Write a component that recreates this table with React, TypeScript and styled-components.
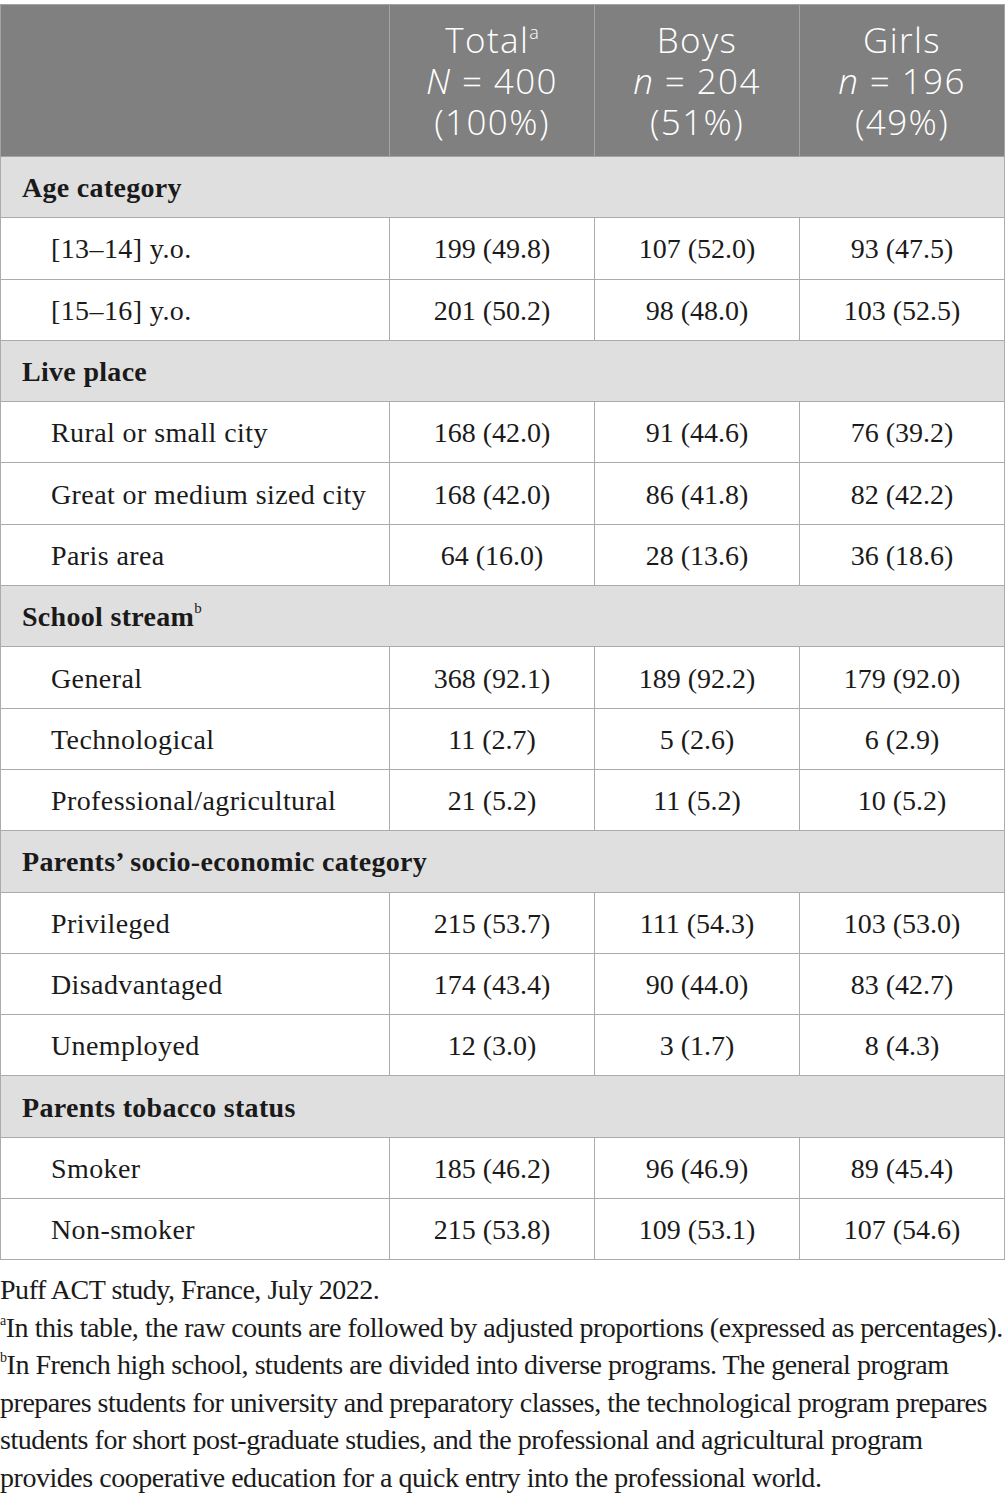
import React from "react";
import styled, { createGlobalStyle } from "styled-components";

const Global = createGlobalStyle`
  html, body { margin: 0; padding: 0; background: #fff; }
  body { font-family: "Liberation Serif", serif; color: #1a1a1a; }
`;

const Page = styled.div`
  width: 1005px;
  padding-top: 4px;
`;

const Table = styled.table`
  width: 1004px;
  border-collapse: collapse;
  table-layout: fixed;
  border: 1.5px solid #ababab;
`;

const HeadCell = styled.th`
  background: #7f807f;
  color: #fff;
  font-family: "Open Sans", sans-serif;
  font-weight: 300;
  font-size: 35px;
  letter-spacing: 1.4px;
  line-height: 41px;
  text-align: center;
  border: 1.5px solid #a3a3a3;
  padding: 14px 0 14px;
  height: 152px;
  box-sizing: border-box;
  vertical-align: middle;
  sup { font-size: 18px; vertical-align: 14px; line-height: 0; letter-spacing: 0; }
  i { font-style: italic; }
`;

const SectionCell = styled.td`
  background: #e0dfe0;
  font-family: "Liberation Serif", serif;
  font-weight: 700;
  font-size: 28px;
  letter-spacing: 0.3px;
  height: 61px;
  box-sizing: border-box;
  padding: 2px 0 0 21px;
  border: 1.5px solid #ababab;
  sup { font-size: 15px; font-weight: 400; vertical-align: 13px; line-height: 0; }
`;

const Row = styled.tr`
  height: 61.3px;
`;

const LabelCell = styled.td`
  font-size: 28px;
  letter-spacing: 0.4px;
  padding: 2px 0 0 50px;
  border: 1.5px solid #ababab;
  white-space: nowrap;
`;

const ValueCell = styled.td`
  font-size: 28px;
  text-align: center;
  padding: 2px 0 0;
  border: 1.5px solid #ababab;
`;

const Notes = styled.div`
  font-family: "Liberation Serif", serif;
  font-size: 28px;
  line-height: 37.5px;
  color: #1a1a1a;
  padding-top: 11px;
  letter-spacing: -0.47px;
  sup { font-size: 14px; vertical-align: 12px; line-height: 0; }
`;

const NoteLine = styled.div`
  white-space: nowrap;
`;

type Sec = { title: string; sup?: string; rows: [string, string, string, string][] };

const sections: Sec[] = [
  {
    title: "Age category",
    rows: [
      ["[13–14] y.o.", "199 (49.8)", "107 (52.0)", "93 (47.5)"],
      ["[15–16] y.o.", "201 (50.2)", "98 (48.0)", "103 (52.5)"],
    ],
  },
  {
    title: "Live place",
    rows: [
      ["Rural or small city", "168 (42.0)", "91 (44.6)", "76 (39.2)"],
      ["Great or medium sized city", "168 (42.0)", "86 (41.8)", "82 (42.2)"],
      ["Paris area", "64 (16.0)", "28 (13.6)", "36 (18.6)"],
    ],
  },
  {
    title: "School stream",
    sup: "b",
    rows: [
      ["General", "368 (92.1)", "189 (92.2)", "179 (92.0)"],
      ["Technological", "11 (2.7)", "5 (2.6)", "6 (2.9)"],
      ["Professional/agricultural", "21 (5.2)", "11 (5.2)", "10 (5.2)"],
    ],
  },
  {
    title: "Parents’ socio-economic category",
    rows: [
      ["Privileged", "215 (53.7)", "111 (54.3)", "103 (53.0)"],
      ["Disadvantaged", "174 (43.4)", "90 (44.0)", "83 (42.7)"],
      ["Unemployed", "12 (3.0)", "3 (1.7)", "8 (4.3)"],
    ],
  },
  {
    title: "Parents tobacco status",
    rows: [
      ["Smoker", "185 (46.2)", "96 (46.9)", "89 (45.4)"],
      ["Non-smoker", "215 (53.8)", "109 (53.1)", "107 (54.6)"],
    ],
  },
];

export default function App() {
  return (
    <Page>
      <Global />
      <Table>
        <colgroup>
          <col style={{ width: 389 }} />
          <col style={{ width: 205 }} />
          <col style={{ width: 205 }} />
          <col style={{ width: 205 }} />
        </colgroup>
        <thead>
          <tr>
            <HeadCell />
            <HeadCell>
              Total<sup>a</sup>
              <br />
              <i>N</i> = 400
              <br />
              (100%)
            </HeadCell>
            <HeadCell>
              Boys
              <br />
              <i>n</i> = 204
              <br />
              (51%)
            </HeadCell>
            <HeadCell>
              Girls
              <br />
              <i>n</i> = 196
              <br />
              (49%)
            </HeadCell>
          </tr>
        </thead>
        <tbody>
          {sections.map((s) => (
            <React.Fragment key={s.title}>
              <Row>
                <SectionCell colSpan={4}>
                  {s.title}
                  {s.sup && <sup>{s.sup}</sup>}
                </SectionCell>
              </Row>
              {s.rows.map((r) => (
                <Row key={r[0]}>
                  <LabelCell>{r[0]}</LabelCell>
                  <ValueCell>{r[1]}</ValueCell>
                  <ValueCell>{r[2]}</ValueCell>
                  <ValueCell>{r[3]}</ValueCell>
                </Row>
              ))}
            </React.Fragment>
          ))}
        </tbody>
      </Table>
      <Notes>
        <NoteLine>Puff ACT study, France, July 2022.</NoteLine>
        <NoteLine>
          <sup>a</sup>In this table, the raw counts are followed by adjusted proportions (expressed as percentages).
        </NoteLine>
        <NoteLine>
          <sup>b</sup>In French high school, students are divided into diverse programs. The general program
        </NoteLine>
        <NoteLine>
          prepares students for university and preparatory classes, the technological program prepares
        </NoteLine>
        <NoteLine>
          students for short post-graduate studies, and the professional and agricultural program
        </NoteLine>
        <NoteLine>provides cooperative education for a quick entry into the professional world.</NoteLine>
      </Notes>
    </Page>
  );
}
